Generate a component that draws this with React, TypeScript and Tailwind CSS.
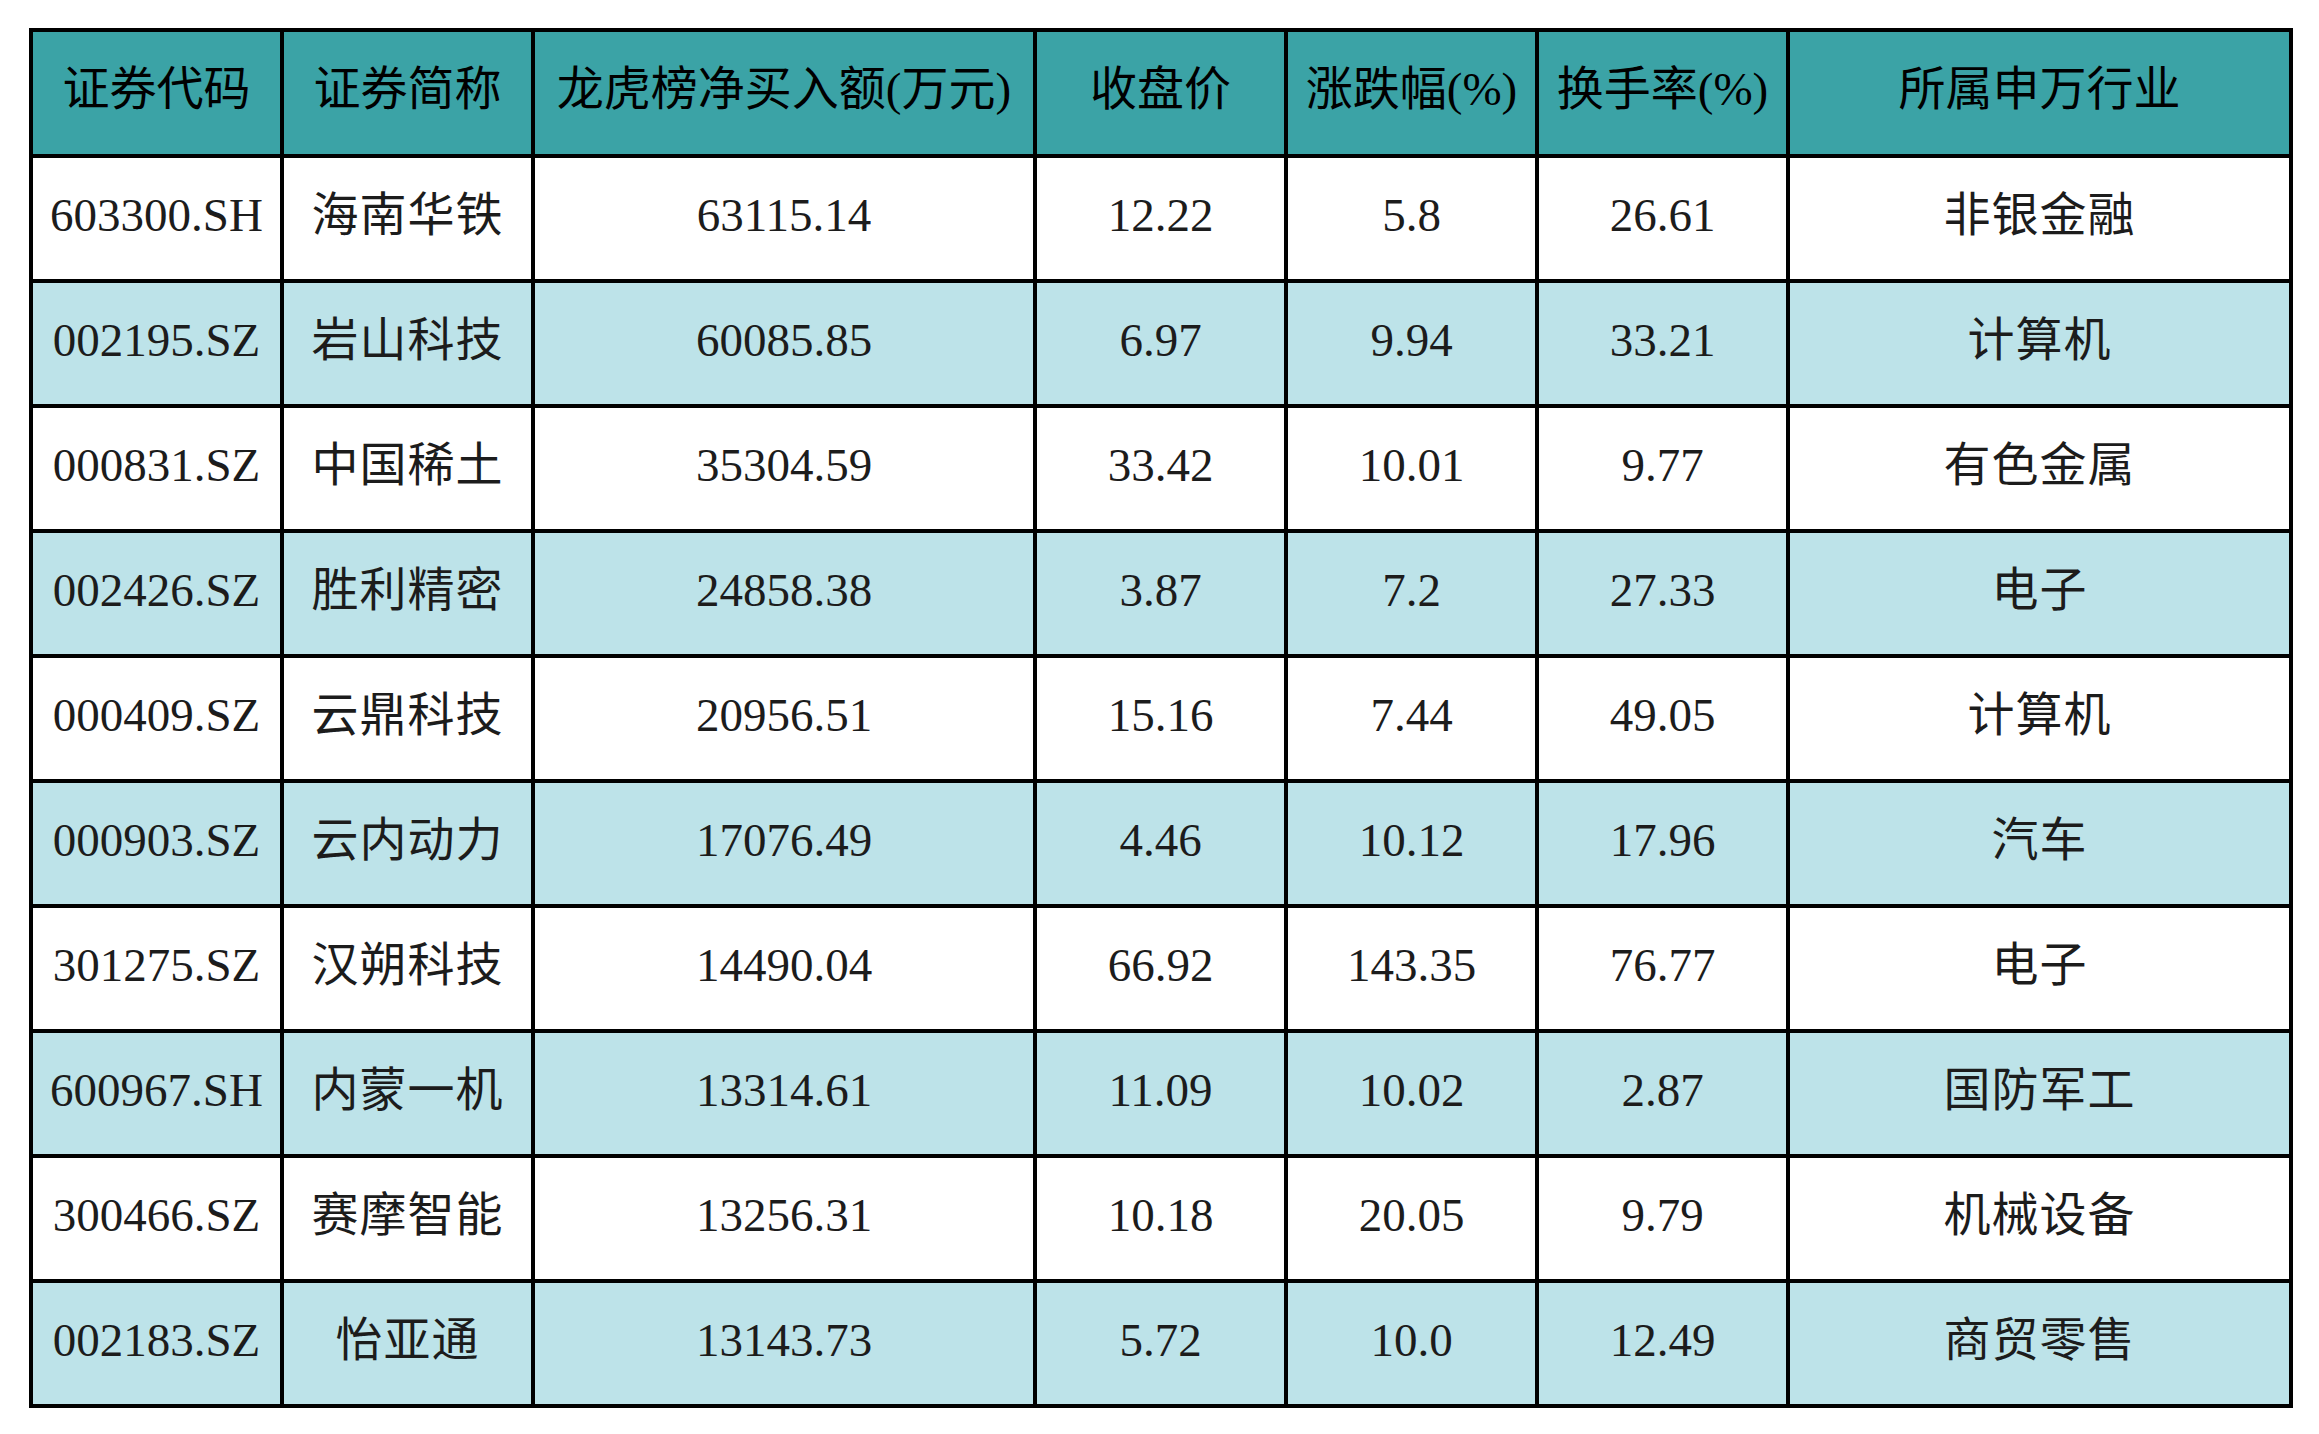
const HEADERS = [
	"证券代码",
	"证券简称",
	"龙虎榜净买入额(万元)",
	"收盘价",
	"涨跌幅(%)",
	"换手率(%)",
	"所属申万行业",
];

const ROWS = [
	["603300.SH", "海南华铁", "63115.14", "12.22", "5.8", "26.61", "非银金融"],
	["002195.SZ", "岩山科技", "60085.85", "6.97", "9.94", "33.21", "计算机"],
	["000831.SZ", "中国稀土", "35304.59", "33.42", "10.01", "9.77", "有色金属"],
	["002426.SZ", "胜利精密", "24858.38", "3.87", "7.2", "27.33", "电子"],
	["000409.SZ", "云鼎科技", "20956.51", "15.16", "7.44", "49.05", "计算机"],
	["000903.SZ", "云内动力", "17076.49", "4.46", "10.12", "17.96", "汽车"],
	["301275.SZ", "汉朔科技", "14490.04", "66.92", "143.35", "76.77", "电子"],
	["600967.SH", "内蒙一机", "13314.61", "11.09", "10.02", "2.87", "国防军工"],
	["300466.SZ", "赛摩智能", "13256.31", "10.18", "20.05", "9.79", "机械设备"],
	["002183.SZ", "怡亚通", "13143.73", "5.72", "10.0", "12.49", "商贸零售"],
];

const WIDTHS = [251, 251, 502, 251, 251, 251, 503];

export default function App() {
	return (
		<div className="w-[2319px] h-[1434px] bg-white pl-[29px] pt-[28px] font-['Liberation_Serif','Noto_Sans_CJK_SC',serif] text-[#1c1c1c]">
			<table className="w-[2262px] table-fixed border-collapse border-[4px] border-black text-[47px] leading-none">
				<colgroup>
					{WIDTHS.map((w, i) => (
						<col key={i} style={{ width: w }} />
					))}
				</colgroup>
				<thead>
					<tr className="h-[126px] bg-[#3ba3a6]">
						{HEADERS.map((h) => (
							<th
								key={h}
								className="border-[4px] border-black pb-[8px] text-center font-normal text-black whitespace-nowrap"
							>
								{h}
							</th>
						))}
					</tr>
				</thead>
				<tbody>
					{ROWS.map((row, i) => (
						<tr
							key={row[0]}
							className={
								i % 2 === 0 ? "h-[125px] bg-white" : "h-[125px] bg-[#bde3e9]"
							}
						>
							{row.map((cell, j) => (
								<td
									key={j}
									className={
										j === 1 || j === 6
											? "border-[4px] border-black pb-[6px] text-center tracking-[1px] whitespace-nowrap"
											: "border-[4px] border-black pb-[6px] text-center whitespace-nowrap"
									}
								>
									{cell}
								</td>
							))}
						</tr>
					))}
				</tbody>
			</table>
		</div>
	);
}
